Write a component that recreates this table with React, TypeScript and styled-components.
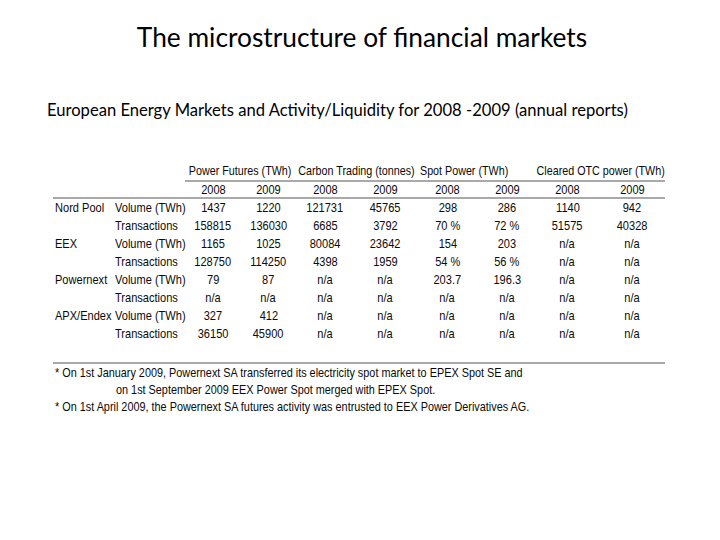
import React from "react";
import styled, { createGlobalStyle } from "styled-components";

const Global = createGlobalStyle`
  html, body { margin: 0; padding: 0; background: #fff; }
  body { width: 720px; height: 540px; overflow: hidden; }
`;

const Slide = styled.div`
  width: 720px;
  height: 540px;
  display: flex;
  flex-direction: column;
  background: #fff;
  color: #000;
`;

const Title = styled.h1`
  margin: 21px 0 0 0;
  font-family: Lato, "Open Sans", sans-serif;
  font-weight: 400;
  font-size: 26.3px;
  line-height: 32px;
  text-align: center;
  padding-left: 4px;
`;

const Subtitle = styled.p`
  margin: 46px 0 0 47px;
  font-family: Lato, "Open Sans", sans-serif;
  font-size: 16.6px;
  line-height: 22px;
`;

const TableWrap = styled.div`
  margin: 41px 0 0 53px;
  width: 612px;
  font-family: "Liberation Sans", Arial, sans-serif;
  font-size: 13px;
  color: #0a0a0a;
`;

const Grid = styled.table`
  border-collapse: collapse;
  table-layout: fixed;
  width: 612px;
`;

const Cell = styled.td<{ $h?: number }>`
  height: ${(p) => p.$h ?? 18}px;
  padding: 0;
  line-height: ${(p) => p.$h ?? 18}px;
  white-space: nowrap;
  overflow: visible;
`;

const GroupCell = styled(Cell)`
  border-bottom: 2px solid #a9a9a9;
`;

const YearRow = styled.tr`
  border-bottom: 2px solid #a9a9a9;
`;

const Align = styled.div<{ $align?: "left" | "center"; $pad?: number }>`
  display: flex;
  justify-content: ${(p) => (p.$align === "left" ? "flex-start" : "center")};
  padding-left: ${(p) => p.$pad ?? 0}px;
`;

const Narrow = styled.span<{ $origin?: "left" | "center"; $scale?: number }>`
  display: inline-block;
  flex: none;
  transform: scaleX(${(p) => p.$scale ?? 0.85});
  transform-origin: ${(p) => p.$origin ?? "center"};
  white-space: nowrap;
`;

const Spacer = styled.div`
  height: 19px;
`;

const Notes = styled.div`
  border-top: 2px solid #a9a9a9;
`;

const Note = styled.div<{ $indent?: boolean }>`
  line-height: 17px;
  padding-left: ${(p) => (p.$indent ? 63 : 2)}px;
  white-space: nowrap;
`;

const NoteText = styled.span`
  display: inline-block;
  transform: scaleX(0.835);
  transform-origin: left;
`;

const widths = [59, 73, 56, 55, 58, 63, 61, 58, 63, 66];

const rows: [string, string, string[]][] = [
  ["Nord Pool", "Volume (TWh)", ["1437", "1220", "121731", "45765", "298", "286", "1140", "942"]],
  ["", "Transactions", ["158815", "136030", "6685", "3792", "70 %", "72 %", "51575", "40328"]],
  ["EEX", "Volume (TWh)", ["1165", "1025", "80084", "23642", "154", "203", "n/a", "n/a"]],
  ["", "Transactions", ["128750", "114250", "4398", "1959", "54 %", "56 %", "n/a", "n/a"]],
  ["Powernext", "Volume (TWh)", ["79", "87", "n/a", "n/a", "203.7", "196.3", "n/a", "n/a"]],
  ["", "Transactions", ["n/a", "n/a", "n/a", "n/a", "n/a", "n/a", "n/a", "n/a"]],
  ["APX/Endex", "Volume (TWh)", ["327", "412", "n/a", "n/a", "n/a", "n/a", "n/a", "n/a"]],
  ["", "Transactions", ["36150", "45900", "n/a", "n/a", "n/a", "n/a", "n/a", "n/a"]],
];

const groups: { label: string; left?: boolean }[] = [
  { label: "Power Futures (TWh)" },
  { label: "Carbon Trading (tonnes)" },
  { label: "Spot Power (TWh)", left: true },
  { label: "Cleared OTC power (TWh)" },
];

export default function App() {
  return (
    <Slide>
      <Global />
      <Title>The microstructure of financial markets</Title>
      <Subtitle>European Energy Markets and Activity/Liquidity for 2008 -2009 (annual reports)</Subtitle>
      <TableWrap>
        <Grid>
          <colgroup>
            {widths.map((w, i) => (
              <col key={i} style={{ width: w }} />
            ))}
          </colgroup>
          <tbody>
            <tr>
              <Cell />
              <Cell />
              {groups.map((g) => (
                <GroupCell key={g.label} colSpan={2}>
                  <Align $align={g.left ? "left" : "center"} $pad={g.left ? 3 : 0}>
                    <Narrow $origin={g.left ? "left" : "center"} $scale={0.825}>
                      {g.label}
                    </Narrow>
                  </Align>
                </GroupCell>
              ))}
            </tr>
            <YearRow>
              <Cell $h={15} />
              <Cell $h={15} />
              {["2008", "2009", "2008", "2009", "2008", "2009", "2008", "2009"].map((y, i) => (
                <Cell key={i} $h={15}>
                  <Align>
                    <Narrow>{y}</Narrow>
                  </Align>
                </Cell>
              ))}
            </YearRow>
            {rows.map(([a, b, vals], r) => (
              <tr key={r}>
                <Cell>
                  <Align $align="left" $pad={2}>
                    <Narrow $origin="left">{a}</Narrow>
                  </Align>
                </Cell>
                <Cell>
                  <Align $align="left" $pad={3}>
                    <Narrow $origin="left">{b}</Narrow>
                  </Align>
                </Cell>
                {vals.map((v, i) => (
                  <Cell key={i}>
                    <Align>
                      <Narrow>{v}</Narrow>
                    </Align>
                  </Cell>
                ))}
              </tr>
            ))}
          </tbody>
        </Grid>
        <Spacer />
        <Notes>
          <Note><NoteText>* On 1st January 2009, Powernext SA transferred its electricity spot market to EPEX Spot SE and</NoteText></Note>
          <Note $indent><NoteText>on 1st September 2009 EEX Power Spot merged with EPEX Spot.</NoteText></Note>
          <Note><NoteText>* On 1st April 2009, the Powernext SA futures activity was entrusted to EEX Power Derivatives AG.</NoteText></Note>
        </Notes>
      </TableWrap>
    </Slide>
  );
}
